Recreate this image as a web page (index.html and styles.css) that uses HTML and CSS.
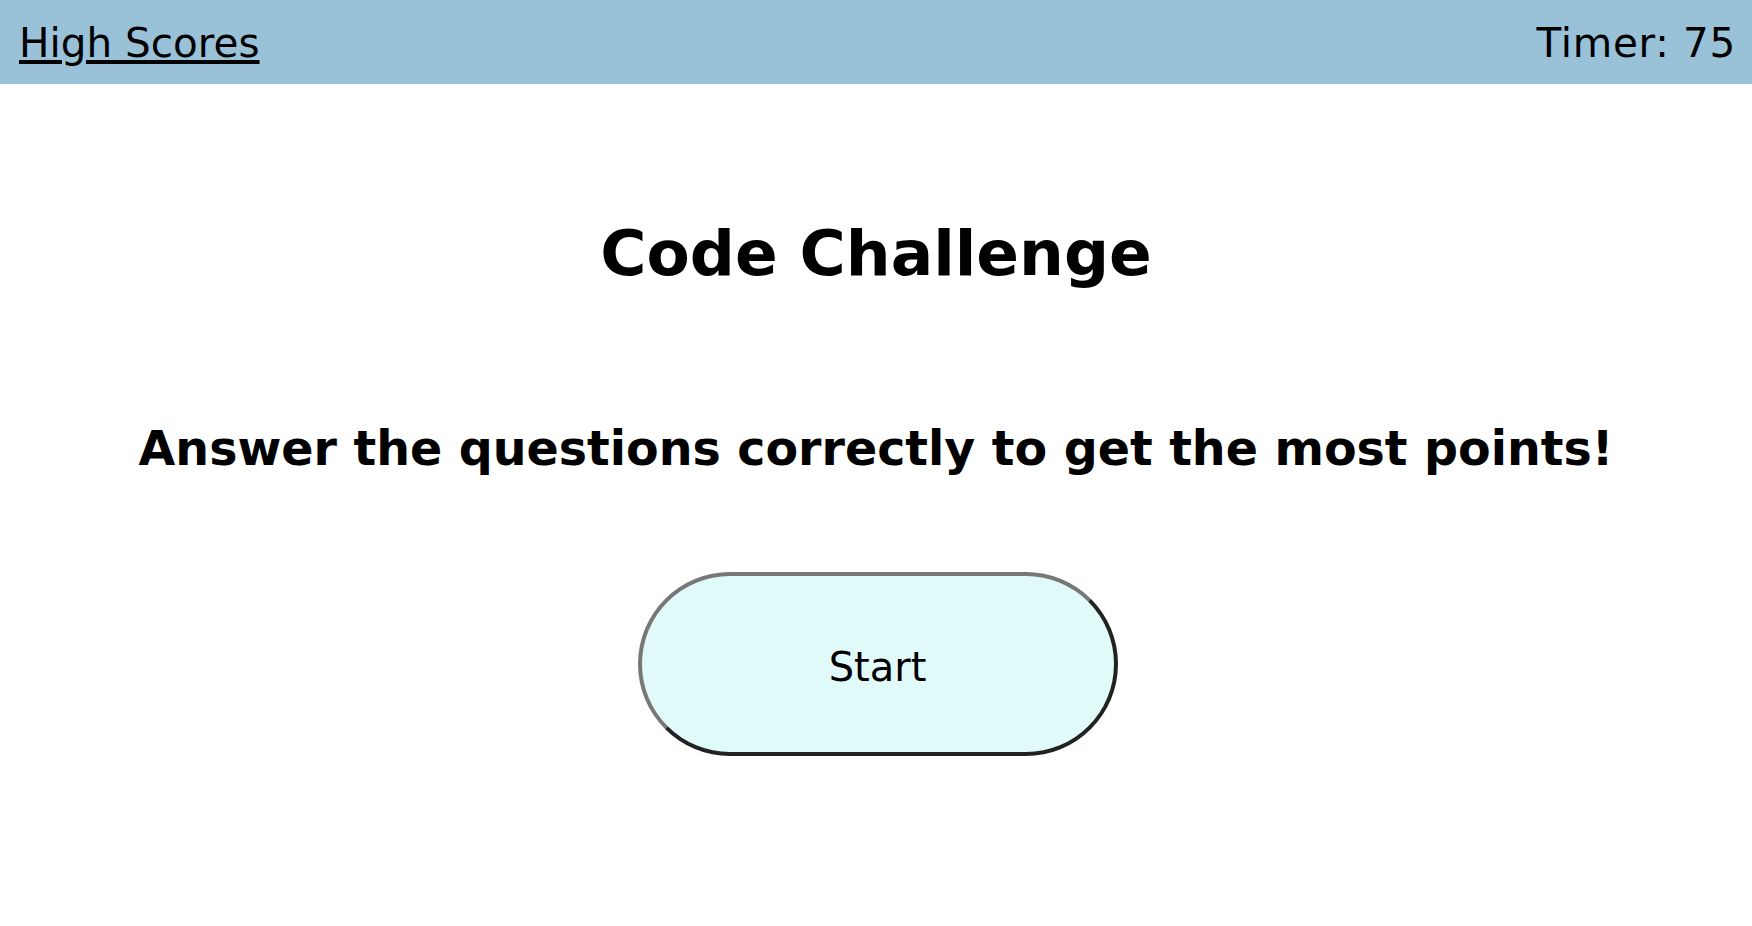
FILE: index.html
```html
<!DOCTYPE html>
<html lang="en">
<head>
<meta charset="utf-8">
<title>Code Challenge</title>
<link rel="stylesheet" href="styles.css">
</head>
<body>
<header class="topbar">
  <a class="scores-link" href="#">High Scores</a>
  <span class="timer">Timer: 75</span>
</header>
<main class="intro">
  <h1 class="title">Code Challenge</h1>
  <p class="lead">Answer the questions correctly to get the most points!</p>
  <button class="start-btn" type="button">Start</button>
</main>
</body>
</html>
```
FILE: styles.css
```css
html, body {
  margin: 0;
  padding: 0;
  background: #ffffff;
  font-family: "DejaVu Sans", Verdana, sans-serif;
  color: #000;
}

.topbar {
  height: 84px;
  box-sizing: border-box;
  padding: 2px 16px 0 19px;
  background: #99c2d9;
  display: flex;
  align-items: center;
  justify-content: space-between;
  font-size: 40.5px;
  line-height: normal;
}

.scores-link {
  color: #000;
  text-decoration: underline;
}

.timer {
  color: #000;
  letter-spacing: 0.7px;
}

.intro {
  display: flex;
  flex-direction: column;
  align-items: center;
}

.title {
  margin: 133px 0 0;
  font-size: 63px;
  font-weight: bold;
  line-height: normal;
}

.lead {
  margin: 131px 0 0;
  font-size: 47.5px;
  font-weight: bold;
  line-height: normal;
}

.start-btn {
  margin: 96px 0 0 3px;
  width: 480px;
  height: 184px;
  box-sizing: border-box;
  padding: 5px 0 0;
  border: 4px solid;
  border-color: #777777 #222222 #222222 #777777;
  border-radius: 100px;
  background: #e0fafa;
  font-family: "DejaVu Sans", Verdana, sans-serif;
  font-size: 40px;
  color: #000;
  cursor: pointer;
}
```
